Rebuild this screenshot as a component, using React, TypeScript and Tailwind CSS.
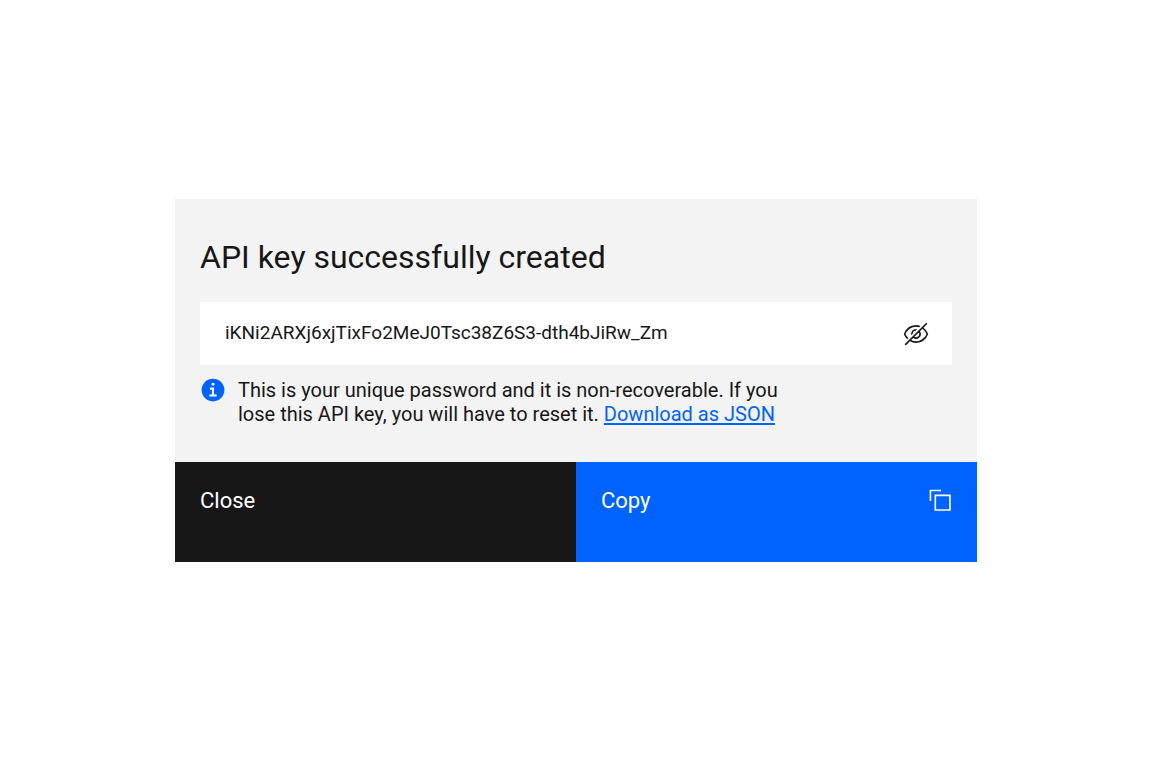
import { useState } from "react";

const API_KEY = "iKNi2ARXj6xjTixFo2MeJ0Tsc38Z6S3-dth4bJiRw_Zm";

function ViewOffIcon() {
  return (
    <svg width="26" height="26" viewBox="0 0 32 32" fill="currentColor" aria-hidden="true">
      <path d="M5.24 22.51l1.43-1.42A14.06 14.06 0 0 1 3.07 16C5.1 10.93 10.7 7 16 7a12.38 12.38 0 0 1 4 .72l1.55-1.56A14.72 14.72 0 0 0 16 5 16.69 16.69 0 0 0 1.06 15.66a1 1 0 0 0 0 .68A16 16 0 0 0 5.24 22.51Z" />
      <path d="M12 15.73a4 4 0 0 1 3.7-3.7l1.81-1.82a6 6 0 0 0-7.33 7.33Z" />
      <path d="M30.94 15.66A16.4 16.4 0 0 0 25.2 8.22L30 3.41 28.59 2 2 28.59 3.41 30l5.1-5.1A15.29 15.29 0 0 0 16 27 16.69 16.69 0 0 0 30.94 16.34a1 1 0 0 0 0-.68ZM20 16a4 4 0 0 1-6 3.44L19.44 14A4 4 0 0 1 20 16Zm-4 9a13.05 13.05 0 0 1-6-1.58l2.54-2.54a6 6 0 0 0 8.35-8.35l2.87-2.87A14.54 14.54 0 0 1 28.93 16C26.9 21.07 21.3 25 16 25Z" />
    </svg>
  );
}

function InfoIcon() {
  return (
    <svg width="26" height="26" viewBox="0 0 32 32" className="shrink-0" aria-hidden="true">
      <circle cx="16" cy="16" r="14" fill="#0062ff" />
      <circle cx="16" cy="9" r="1.8" fill="#fff" />
      <path d="M12.2 13h5.1v8.4h3.2V24h-9v-2.6h3.2v-5.8h-2.5z" fill="#fff" />
    </svg>
  );
}

function CopyIcon() {
  return (
    <svg width="26" height="26" viewBox="0 0 32 32" fill="none" stroke="currentColor" strokeWidth="2" aria-hidden="true">
      <path d="M9 9h18v18H9z" />
      <path d="M3 16V3h13" />
    </svg>
  );
}

export default function App() {
  const [visible, setVisible] = useState(true);

  return (
    <main className="flex min-h-screen items-center justify-center bg-white font-['Roboto',sans-serif] text-[#171717]">
      <section
        role="dialog"
        aria-labelledby="dialog-title"
        className="w-full max-w-[802px] bg-[#f3f3f3]"
      >
        <div className="px-[25px] pt-[38px] pb-9">
          <h1 id="dialog-title" className="text-[32px] leading-[40px]">
            API key successfully created
          </h1>

          {/* Key field */}
          <div className="mt-[25px] flex h-[63px] items-center bg-white pr-[23px] pl-[25px]">
            <input
              type={visible ? "text" : "password"}
              aria-label="API key"
              readOnly
              value={API_KEY}
              className="min-w-0 flex-1 bg-transparent text-[19px] outline-none"
            />
            <button
              type="button"
              aria-label={visible ? "Hide API key" : "Show API key"}
              onClick={() => setVisible(!visible)}
            >
              <ViewOffIcon />
            </button>
          </div>

          <div className="mt-3 flex items-start gap-3">
            <InfoIcon />
            <p className="max-w-[560px] pt-px text-[20px] leading-[24px]">
              This is your unique password and it is non-recoverable. If you lose this API key, you
              will have to reset it.{" "}
              <a href="#" className="text-[#0062ff] underline underline-offset-2">
                Download as JSON
              </a>
            </p>
          </div>
        </div>

        {/* Actions */}
        <div className="grid grid-cols-2 text-[22px] leading-[26px] text-white">
          <button type="button" className="flex h-[100px] items-start bg-[#171717] px-[25px] pt-[26px]">
            Close
          </button>
          <button
            type="button"
            onClick={() => navigator.clipboard?.writeText(API_KEY)}
            className="flex h-[100px] items-start justify-between bg-[#0062ff] pt-[26px] pr-[23px] pl-[25px]"
          >
            Copy
            <CopyIcon />
          </button>
        </div>
      </section>
    </main>
  );
}
